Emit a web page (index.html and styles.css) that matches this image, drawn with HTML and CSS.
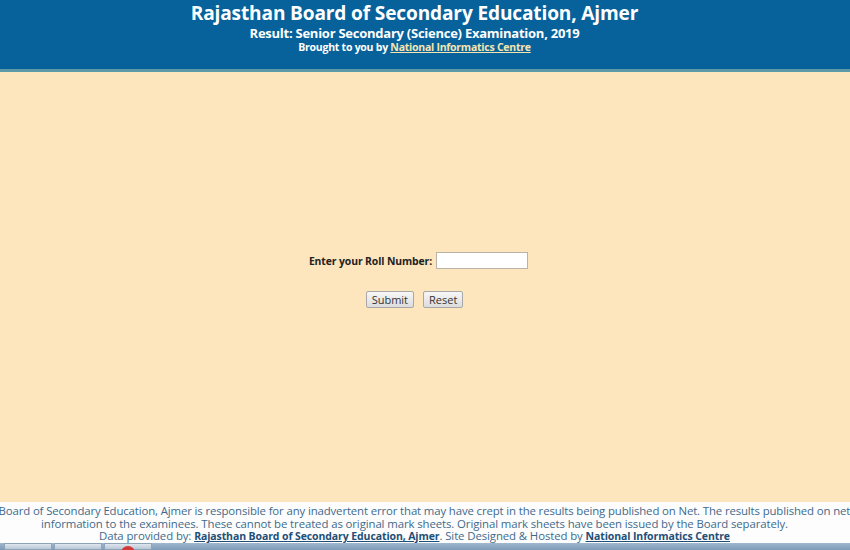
FILE: index.html
```html
<!DOCTYPE html>
<html>
<head>
<meta charset="utf-8">
<link rel="stylesheet" href="styles.css">
</head>
<body>
<div class="page">
  <header class="header">
    <div class="title">Rajasthan Board of Secondary Education, Ajmer</div>
    <div class="subtitle">Result: Senior Secondary (Science) Examination, 2019</div>
    <div class="brought">Brought to you by <a href="#">National Informatics Centre</a></div>
  </header>
  <main class="main">
    <form class="form">
      <div class="row">
        <label class="label">Enter your Roll Number:</label>
        <input class="input" type="text">
      </div>
      <div class="buttons">
        <button type="button" class="btn">Submit</button>
        <button type="button" class="btn">Reset</button>
      </div>
    </form>
  </main>
  <footer class="footer">
    <div class="fline fline1"><span>Rajasthan Board of Secondary Education, Ajmer is responsible for any inadvertent error that may have crept in the results being published on Net. The results published on net are for immediate</span></div>
    <div class="fline"><span>information to the examinees. These cannot be treated as original mark sheets. Original mark sheets have been issued by the Board separately.</span></div>
    <div class="fline"><span>Data provided by: <a href="#">Rajasthan Board of Secondary Education, Ajmer</a>. Site Designed &amp; Hosted by <a href="#">National Informatics Centre</a></span></div>
  </footer>
  <div class="taskbar">
    <span class="tb tb1"></span><span class="tb tb2"></span><span class="tb tb3"><span class="red"></span></span>
  </div>
</div>
</body>
</html>
```

FILE: styles.css
```css
html, body {
  margin: 0;
  padding: 0;
}
body {
  font-family: "Open Sans", "DejaVu Sans", sans-serif;
  width: 850px;
  height: 550px;
  overflow: hidden;
}
.page {
  display: flex;
  flex-direction: column;
  height: 550px;
}
.header {
  background: #07629b;
  color: #fff;
  text-align: center;
  height: 69px;
  border-bottom: 3px solid #5d9aa8;
  box-sizing: content-box;
  padding-right: 21px;
}
.title {
  font-size: 19.1px;
  font-weight: 700;
  line-height: 26px;
  letter-spacing: -0.15px;
}
.subtitle {
  font-size: 13px;
  font-weight: 700;
  line-height: 14px;
  letter-spacing: -0.25px;
}
.brought {
  font-size: 10.5px;
  font-weight: 700;
  line-height: 15px;
  letter-spacing: -0.25px;
}
.brought a {
  color: #f5e6b0;
}
.main {
  flex: 1;
  background: #fde5bd;
  display: flex;
  justify-content: center;
  align-items: flex-start;
  padding-right: 21px;
}
.form {
  margin-top: 180px;
  display: flex;
  flex-direction: column;
  align-items: center;
}
.row {
  display: flex;
  align-items: center;
  gap: 4px;
  padding-left: 8px;
}
.label {
  font-size: 10.4px;
  font-weight: 700;
  color: #222;
  letter-spacing: -0.1px;
}
.input {
  width: 88px;
  height: 13px;
  border: 1px solid #b9b3a8;
  background: #fff;
  padding: 1px;
  margin: 0;
  font-size: 11px;
}
.buttons {
  display: flex;
  gap: 9px;
  margin-top: 22px;
}
.btn {
  font-family: "Open Sans", "DejaVu Sans", sans-serif;
  font-size: 11px;
  color: #333;
  background: linear-gradient(#f7f7f7, #dcdcdc);
  border: 1px solid #a8a8a8;
  border-radius: 2px;
  height: 17px;
  padding: 0 5px;
  line-height: 14px;
}
.footer {
  background: #fdfdfd;
  color: #3e6a8c;
  font-size: 11.4px;
  line-height: 12.5px;
  height: 41px;
  padding-top: 3px;
  padding-right: 21px;
  box-sizing: border-box;
  letter-spacing: -0.1px;
}
.fline {
  white-space: nowrap;
  display: flex;
  justify-content: center;
}
.fline1 {
  padding-left: 62px;
  letter-spacing: -0.13px;
}
.footer a {
  color: #1d4f78;
  font-weight: 700;
  font-size: 10.5px;
  text-decoration: underline;
}
.taskbar {
  height: 7px;
  background: linear-gradient(#9fb8cf, #7d9ab6);
  display: flex;
  gap: 2px;
  padding-left: 4px;
}
.tb {
  width: 48px;
  height: 7px;
  background: linear-gradient(#dfe6ee, #b7c6d6);
  border: 1px solid #8da3b8;
  box-sizing: border-box;
  position: relative;
}
.tb3 .red {
  position: absolute;
  left: 16px;
  top: 2px;
  width: 14px;
  height: 8px;
  border-radius: 7px 7px 0 0;
  background: #d23a3a;
}
```
